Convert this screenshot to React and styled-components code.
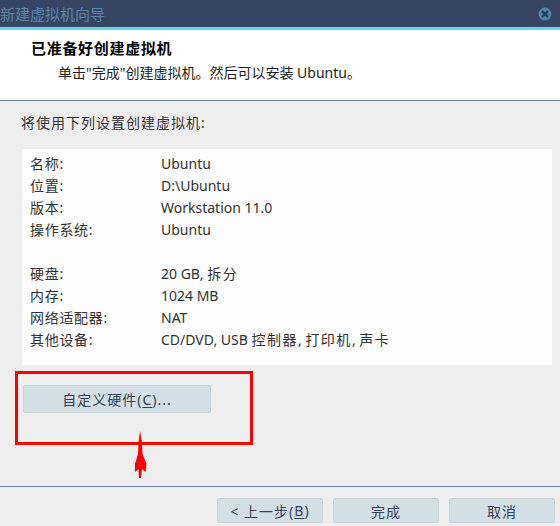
import React from "react";
import styled, { createGlobalStyle } from "styled-components";

const Global = createGlobalStyle`
  html, body { margin: 0; padding: 0; background: #eeeeee; }
  body { font-family: "Noto Sans", "Noto Sans CJK SC", sans-serif; }
`;

const Window = styled.div`
  width: 560px;
  height: 526px;
  display: flex;
  flex-direction: column;
  background: #eeeeee;
  overflow: hidden;
  font-family: "Noto Sans", "Noto Sans CJK SC", sans-serif;
  color: #333;
`;

const TitleBar = styled.div`
  height: 27px;
  background: #384463;
  border-bottom: 3px solid #63d8ee;
  display: flex;
  align-items: center;
  justify-content: space-between;
  padding: 0 8px 0 0;
  font-family: "Noto Sans CJK SC", sans-serif;
  font-size: 15px;
  color: #5a86ad;
`;

const Header = styled.div`
  height: 71px;
  box-sizing: border-box;
  background: #ffffff;
  border-bottom: 1px solid #6c80a2;
  padding: 8px 0 0 31px;
  display: flex;
  flex-direction: column;
`;

const HeadTitle = styled.div`
  font-family: "Noto Sans CJK SC", sans-serif;
  font-weight: bold;
  font-size: 15px;
  letter-spacing: 0.7px;
  line-height: 20px;
  color: #000;
`;

const HeadSub = styled.div`
  margin: 5px 0 0 27px;
  font-size: 14px;
  line-height: 20px;
  color: #222;
`;

const Body = styled.div`
  padding: 12px 8px 0 21px;
  display: flex;
  flex-direction: column;
`;

const Intro = styled.div`
  font-size: 14px;
  line-height: 20px;
  letter-spacing: 1px;
`;

const ListBox = styled.div`
  margin: 16px 0 0 1px;
  background: #fdfdfd;
  padding: 4px 0 14px 8px;
`;

const Row = styled.div`
  display: flex;
  height: 22px;
  line-height: 22px;
  font-size: 14px;
  color: #333;
`;

const Label = styled.span`
  width: 131px;
  flex: none;
  letter-spacing: 0.7px;
`;

const Cjk = styled.span`
  letter-spacing: 1.5px;
`;

const Mark = styled.div`
  margin: 6px 0 0 -6px;
  width: 238px;
  height: 74px;
  box-sizing: border-box;
  border: 3px solid #ff0000;
  padding: 11px 0 0 5px;
`;

const Button = styled.button`
  width: ${(p) => p.w || 106}px;
  height: ${(p) => p.h || 25}px;
  box-sizing: border-box;
  background: #d4dfe5;
  border: 1px solid #c6d4db;
  border-radius: 2px;
  font-family: "Noto Sans", "Noto Sans CJK SC", sans-serif;
  font-size: 14px;
  letter-spacing: 1px;
  color: #34405a;
  padding: 0;
  display: flex;
  align-items: center;
  justify-content: center;
`;

const U = styled.span`
  text-decoration: underline;
  text-underline-offset: 2px;
`;

const Arrow = styled.svg`
  position: absolute;
  left: 130px;
  top: 428px;
`;

const Footer = styled.div`
  margin-top: auto;
  border-top: 1px solid #6c80a2;
  padding: 11px 5px 3px 0;
  display: flex;
  justify-content: flex-end;
  gap: 10px;
`;

const rows1 = [
  ["名称:", "Ubuntu"],
  ["位置:", "D:\\Ubuntu"],
  ["版本:", "Workstation 11.0"],
  ["操作系统:", "Ubuntu"],
];
const rows2 = [
  ["硬盘:", <>20 GB, <Cjk>拆分</Cjk></>],
  ["内存:", "1024 MB"],
  ["网络适配器:", "NAT"],
  [
    "其他设备:",
    <>
      CD/DVD, USB <Cjk>控制器</Cjk>, <Cjk>打印机</Cjk>, <Cjk>声卡</Cjk>
    </>,
  ],
];

export default function App() {
  return (
    <Window>
      <Global />
      <TitleBar>
        <span>新建虚拟机向导</span>
        <svg width="14" height="14" viewBox="0 0 14 14">
          <circle cx="7" cy="7" r="6.5" fill="#4e86a9" />
          <path d="M4.6 4.6 L9.4 9.4 M9.4 4.6 L4.6 9.4" stroke="#2b3c5c" strokeWidth="2.2" strokeLinecap="round" />
        </svg>
      </TitleBar>
      <Header>
        <HeadTitle>已准备好创建虚拟机</HeadTitle>
        <HeadSub>单击"完成"创建虚拟机。然后可以安装 Ubuntu。</HeadSub>
      </Header>
      <Body>
        <Intro>将使用下列设置创建虚拟机:</Intro>
        <ListBox>
          {rows1.map(([l, v]) => (
            <Row key={l}>
              <Label>{l}</Label>
              <span>{v}</span>
            </Row>
          ))}
          <Row />
          {rows2.map(([l, v]) => (
            <Row key={l}>
              <Label>{l}</Label>
              <span>{v}</span>
            </Row>
          ))}
        </ListBox>
        <Mark>
          <Button w={188} h={28}>
            自定义硬件(<U>C</U>)...
          </Button>
        </Mark>
      </Body>
      <Arrow width="20" height="54" viewBox="0 0 20 54">
        <path
          d="M10 3 L12 14 L12.5 26 L16.5 36 L15.5 44 L12 41 L11 50 L9 50 L8.5 41 L5 44 L5 36 L8 26 L8.5 14 Z"
          fill="#ff0000"
        />
      </Arrow>
      <Footer>
        <Button>
          &lt; 上一步(<U>B</U>)
        </Button>
        <Button>完成</Button>
        <Button>取消</Button>
      </Footer>
    </Window>
  );
}
